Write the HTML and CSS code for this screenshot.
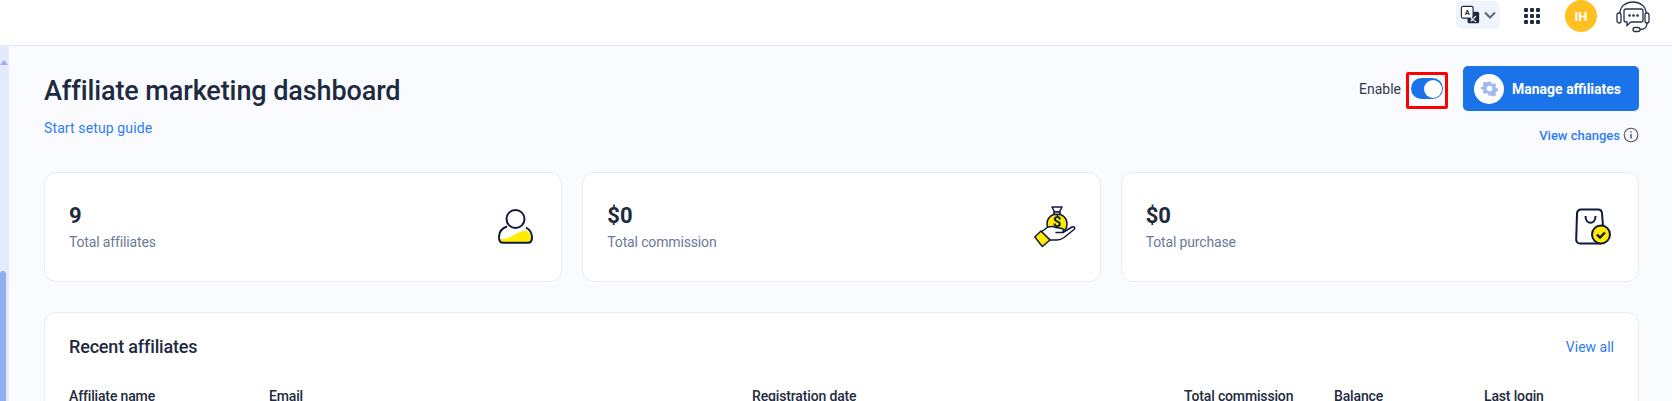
FILE: index.html
```html
<!DOCTYPE html>
<html lang="en">
<head>
  <meta charset="UTF-8">
  <meta name="viewport" content="width=device-width, initial-scale=1.0">
  <link rel="stylesheet" href="styles.css">
</head>
<body>

<!-- Top bar -->
<header class="topbar">
  <div class="lang-btn">
    <svg width="20" height="20" viewBox="0 0 24 24">
      <rect x="9" y="8" width="14" height="14" rx="2" fill="#1e2a40"/>
      <rect x="1.7" y="1.7" width="14" height="14" rx="2" fill="#fff" stroke="#1e2a40" stroke-width="1.4"/>
      <text x="8.7" y="12.3" class="lang-a">A</text>
      <path d="M13 19.500l6-6M13 14.500c1 2.500 3.500 4.500 6.500 5.500" fill="none" stroke="#fff" stroke-width="1.300"/>
    </svg>
    <svg width="14" height="14" viewBox="0 0 14 14">
      <path d="M2 4.500l5 5 5-5" fill="none" stroke="#5f6673" stroke-width="2"/>
    </svg>
  </div>
  <div class="apps-grid">
    <span></span><span></span><span></span>
    <span></span><span></span><span></span>
    <span></span><span></span><span></span>
  </div>
  <div class="avatar">IH</div>
  <svg class="headset" width="34" height="32" viewBox="0 0 34 32" fill="none" stroke="#27344c" stroke-width="1.300">
    <path d="M4 12C4 5.500 10 1 17 1s13 4.500 13 11"/>
    <rect x="1" y="12" width="4" height="10" rx="2"/>
    <rect x="29" y="12" width="4" height="10" rx="2"/>
    <path d="M10 8h15a2 2 0 0 1 2 2v9a2 2 0 0 1-2 2H15l-4 3.500V21h-1a2 2 0 0 1-2-2v-9a2 2 0 0 1 2-2z"/>
    <path d="M31 22c0 4-2 6.500-7 6.500"/>
    <rect x="17" y="26.500" width="7" height="4" rx="2"/>
    <circle cx="13.500" cy="14.500" r=".7" fill="#27344c"/>
    <circle cx="17.500" cy="14.500" r=".7" fill="#27344c"/>
    <circle cx="21.500" cy="14.500" r=".7" fill="#27344c"/>
  </svg>
</header>

<div class="layout">
  <div class="side-scroll">
    <span class="scroll-arrow"></span>
    <span class="scroll-thumb"></span>
  </div>

  <main class="content">
    <div class="page-head">
      <div>
        <h1>Affiliate marketing dashboard</h1>
        <a class="link setup-link">Start setup guide</a>
      </div>
      <div class="head-actions">
        <div class="actions-row">
          <span class="enable-label">Enable</span>
          <span class="toggle-box"><span class="toggle"><span class="knob"></span></span></span>
          <button class="manage-btn">
            <span class="gear-circle">
              <svg width="17" height="17" viewBox="0 0 24 24">
                <path fill="#a3b8ee" fill-rule="evenodd" d="M10 2h4l.6 2.800 1.900.8 2.400-1.500 2.900 2.900-1.500 2.400.8 1.900 2.800.6v4l-2.800.6-.8 1.900 1.500 2.400-2.900 2.900-2.400-1.500-1.900.8L14 22h-4l-.6-2.800-1.900-.8-2.400 1.500-2.900-2.900 1.500-2.400-.8-1.900L.1 14v-4l2.800-.6.8-1.900-1.500-2.400 2.900-2.900 2.400 1.500 1.900-.8zM12 8a4 4 0 1 0 0 8 4 4 0 0 0 0-8z"/>
              </svg>
            </span>
            Manage affiliates
          </button>
        </div>
        <a class="link view-changes">View changes
          <svg width="16" height="16" viewBox="0 0 16 16" fill="none" stroke="#4a5060" stroke-width="1.100">
            <circle cx="8" cy="8" r="6.800"/>
            <path d="M8 7v4.500M8 4.200v1.300" stroke-width="1.400"/>
          </svg>
        </a>
      </div>
    </div>

    <section class="stats">
      <div class="card stat-card">
        <div>
          <div class="stat-value">9</div>
          <div class="stat-label">Total affiliates</div>
        </div>
        <svg class="icon-user" width="35" height="35" viewBox="0 0 35 35">
          <path d="M6.500 17.500C3 19 1 22 1 28c0 3.500 1.500 5.800 4 5.800h25c2.500 0 4-2.300 4-5.800 0-6-2-9-5.500-10.500z" fill="#fff"/>
          <path d="M2 30c6 0 9-1 14-4 4-2.500 8-4 11-4.500 4 1.500 6.500 4 6.500 8 0 2.500-1 4-3.500 4H5c-2 0-3-1.500-3-3.500z" fill="#ffec00"/>
          <circle cx="17.500" cy="10" r="9" fill="#fff" stroke="#10193a" stroke-width="2"/>
          <path d="M9 17.500C4 19 1 22.500 1 28.500 1 32 2.500 33.800 5 33.800h25c2.500 0 4-1.800 4-5.300 0-5-2.500-8-6-10" fill="none" stroke="#10193a" stroke-width="2"/>
        </svg>
      </div>
      <div class="card stat-card">
        <div>
          <div class="stat-value">$0</div>
          <div class="stat-label">Total commission</div>
        </div>
        <svg class="icon-money" width="42" height="42" viewBox="0 0 42 42" stroke="#10193a" stroke-width="1.500" stroke-linejoin="round">
          <path d="M18 1h10l-2.500 5h-5z" fill="#fff"/>
          <path d="M20 6h6v2.500h-6z" fill="#fff"/>
          <path d="M19.500 8.500C15 10.500 13 14 13 18c0 3 1 5 2 6h16c1.500-1.500 2-3.500 2-6 0-4-2-7.500-6.500-9.500z" fill="#ffec00"/>
          <text x="23" y="21" class="bag-dollar">$</text>
          <path d="M7 26l7-5c3-1 6-.5 8 .5l6 1c2 .5 2 3.500 0 4h-6 7l9-5.500c2.500-1 3.500 1 2 2.500l-10 8c-2 1.500-4 2.500-7 2.500H16z" fill="#fff"/>
          <path d="M7 25L.8 31l7.500 9.500L16 34z" fill="#ffec00"/>
        </svg>
      </div>
      <div class="card stat-card">
        <div>
          <div class="stat-value">$0</div>
          <div class="stat-label">Total purchase</div>
        </div>
        <svg class="icon-bag" width="36" height="37" viewBox="0 0 36 37" fill="none">
          <path d="M6 1.500h17a4 4 0 0 1 4 3.500l2 26a4 4 0 0 1-4 4.500H5A3.800 3.800 0 0 1 1.200 31.500L2 5.500A4 4 0 0 1 6 1.500z" fill="#fff" stroke="#10193a" stroke-width="2"/>
          <path d="M10.500 8c0 9 10 9 10 0" stroke="#10193a" stroke-width="2"/>
          <circle cx="26" cy="26.500" r="9" fill="#ffec00" stroke="#10193a" stroke-width="2"/>
          <path d="M22 26.500l3 3 5-5" stroke="#10193a" stroke-width="2.400"/>
        </svg>
      </div>
    </section>

    <section class="card recent">
      <div class="recent-head">
        <h2>Recent affiliates</h2>
        <a class="link">View all</a>
      </div>
      <div class="table-head">
        <span>Affiliate name</span>
        <span>Email</span>
        <span>Registration date</span>
        <span>Total commission</span>
        <span>Balance</span>
        <span>Last login</span>
      </div>
    </section>
  </main>
</div>

</body>
</html>
```

FILE: styles.css
```css
body {
  margin: 0;
  height: 401px;
  overflow: hidden;
  font-family: Roboto, Arial, sans-serif;
  color: #1e2a40;
  background: #fafbff;
}

.topbar {
  height: 46px;
  box-sizing: border-box;
  background: #fff;
  border-bottom: 1px solid #e2e8f5;
  display: flex;
  align-items: flex-start;
  justify-content: flex-end;
  padding-right: 22px;
}

.lang-btn {
  width: 44px;
  height: 28px;
  margin-top: 1px;
  padding-left: 4px;
  box-sizing: border-box;
  display: flex;
  align-items: center;
  gap: 3px;
  background: #f0f4fd;
  border-radius: 6px;
}

.lang-a {
  font-family: Roboto, Arial, sans-serif;
  font-size: 9px;
  font-weight: 700;
  text-anchor: middle;
  fill: #1e2a40;
}

.bag-dollar {
  font-family: Roboto, Arial, sans-serif;
  font-size: 15px;
  font-weight: 700;
  text-anchor: middle;
  fill: #10193a;
  stroke: none;
}

.apps-grid {
  width: 16px;
  margin: 8px 0 0 24px;
  display: grid;
  grid-template-columns: repeat(3, 4px);
  grid-auto-rows: 4px;
  gap: 2px;
}

.apps-grid span {
  background: #1e2a40;
  border-radius: 1px;
}

.avatar {
  width: 32px;
  height: 32px;
  margin-left: 25px;
  border-radius: 50%;
  background: #ffc024;
  color: #fff;
  font-size: 13px;
  font-weight: 700;
  display: flex;
  align-items: center;
  justify-content: center;
}

.headset {
  margin: 1px 0 0 19px;
}

.layout {
  display: flex;
  height: 355px;
  overflow: hidden;
}

.side-scroll {
  position: relative;
  flex: 0 0 9px;
  background: #e4e9fc;
}

.scroll-arrow {
  position: absolute;
  left: 0;
  top: 14px;
  width: 0;
  height: 0;
  border-left: 4px solid transparent;
  border-right: 4px solid transparent;
  border-bottom: 5px solid #99b0ec;
}

.scroll-thumb {
  position: absolute;
  left: 0;
  top: 225px;
  bottom: 0;
  width: 6px;
  background: #92aeef;
  border-radius: 3px 3px 0 0;
}

.content {
  flex: 1;
  padding: 19px 33px 0 35px;
  overflow: hidden;
}

.page-head {
  display: flex;
  justify-content: space-between;
  height: 107px;
}

h1 {
  margin: 10px 0 0;
  font-size: 27px;
  line-height: 32px;
  font-weight: 500;
  letter-spacing: -0.1px;
}

.link {
  color: #2f7bf0;
  font-size: 14px;
  text-decoration: none;
}

.setup-link {
  display: block;
  margin-top: 11px;
  line-height: 20px;
  letter-spacing: 0.12px;
}

.head-actions {
  display: flex;
  flex-direction: column;
  align-items: flex-end;
}

.actions-row {
  display: flex;
  align-items: center;
  height: 45px;
  margin-top: 1px;
}

.enable-label {
  font-size: 14px;
  color: #333b4a;
}

.toggle-box {
  margin: 3px 15.500px 0 4.500px;
  width: 42px;
  height: 37px;
  padding-top: 3.500px;
  box-sizing: border-box;
  border: 3px solid #f00;
  border-radius: 2px;
  display: flex;
  align-items: flex-start;
  justify-content: center;
}

.toggle {
  width: 32px;
  height: 21px;
  flex: none;
  box-sizing: border-box;
  background: #1a73e8;
  border-radius: 11px;
  display: flex;
  align-items: center;
  justify-content: flex-end;
  padding-right: 1px;
}

.knob {
  width: 18px;
  height: 18px;
  background: #fff;
  border-radius: 50%;
}

.manage-btn {
  width: 176px;
  height: 45px;
  padding: 0 0 0 11px;
  border: 0;
  border-radius: 5px;
  background: #1a73e8;
  color: #fff;
  font-family: inherit;
  font-size: 14px;
  font-weight: 700;
  display: flex;
  align-items: center;
  gap: 8px;
}

.gear-circle {
  width: 30px;
  height: 30px;
  background: #fff;
  border-radius: 50%;
  display: flex;
  align-items: center;
  justify-content: center;
}

.view-changes {
  margin-top: 16px;
  font-size: 13px;
  font-weight: 500;
  display: flex;
  align-items: center;
  gap: 3px;
}

.stats {
  display: grid;
  grid-template-columns: repeat(3, 1fr);
  gap: 20px;
}

.card {
  background: #fff;
  border: 1px solid #e9ebf0;
  border-radius: 12px;
  box-sizing: border-box;
}

.stat-card {
  height: 110px;
  padding: 0 24px 1px;
  display: flex;
  align-items: center;
  justify-content: space-between;
}

.icon-user {
  margin-right: 4px;
}

.icon-bag {
  margin-right: 3px;
}

.stat-value {
  font-size: 22px;
  font-weight: 700;
  line-height: 28px;
}

.stat-label {
  margin-top: 2px;
  font-size: 14px;
  line-height: 20px;
  color: #6c7a96;
  letter-spacing: -0.15px;
}

.recent {
  margin-top: 30px;
  padding: 22px 24px 0;
  height: 89px;
  border-bottom: 0;
  border-radius: 12px 12px 0 0;
}

.recent-head {
  display: flex;
  justify-content: space-between;
  align-items: center;
}

h2 {
  margin: 0;
  font-size: 18px;
  line-height: 24px;
  font-weight: 500;
  letter-spacing: -0.17px;
}

.table-head {
  margin-top: 32px;
  display: grid;
  grid-template-columns: 200px 483px 432px 150px 150px 1fr;
  font-size: 14px;
  line-height: 10px;
  font-weight: 500;
  letter-spacing: -0.15px;
}
```
